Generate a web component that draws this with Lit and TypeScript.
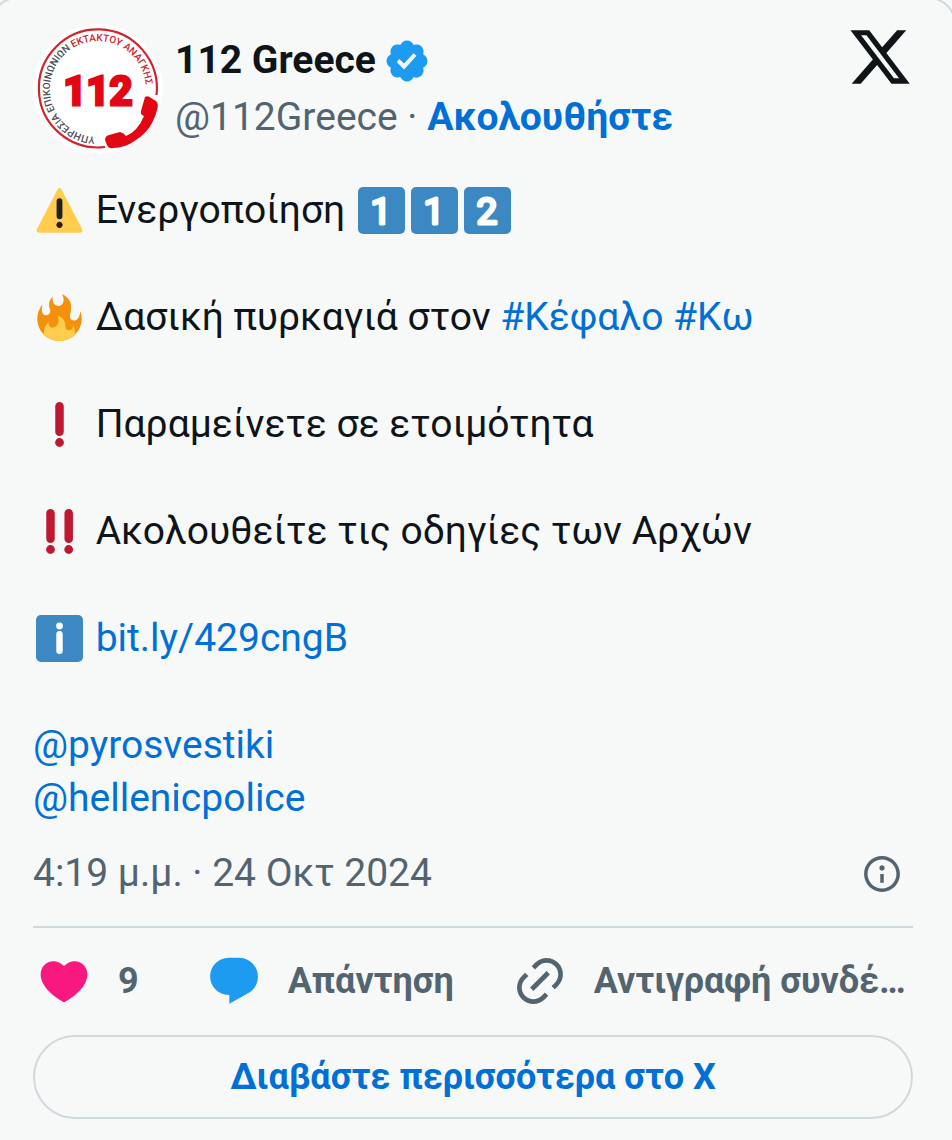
import { LitElement, html, css, svg } from "lit";
import { customElement } from "lit/decorators.js";

const keycap = (digit: string) => html`<svg class="emoji" viewBox="0 0 47 47" role="img" aria-label="${digit}">
  <rect width="47" height="47" rx="5" fill="#3b88c3" />
  <text class="keycap" x="23" y="36.5" text-anchor="middle">${digit}</text>
</svg>`;

const bang = (x: number) => svg`
  <rect x=${x - 4.25} y="1" width="8.5" height="34" rx="4.25" fill="#be1931" />
  <circle cx=${x} cy="41.5" r="4.4" fill="#be1931" />`;

const warning = html`<svg class="emoji" viewBox="0 0 36 36" aria-hidden="true">
  <path fill="#FFCC4D" d="M2.653 35C.811 35-.001 33.662.847 32.027L16.456 1.972c.849-1.635 2.238-1.635 3.087 0l15.609 30.056c.85 1.634.037 2.972-1.805 2.972H2.653z" />
  <path fill="#231F20" d="M15.583 28.953c0-1.333 1.085-2.418 2.419-2.418 1.333 0 2.418 1.085 2.418 2.418 0 1.334-1.086 2.419-2.418 2.419-1.334 0-2.419-1.085-2.419-2.419zm.186-18.293c0-1.302.961-2.108 2.232-2.108 1.241 0 2.233.837 2.233 2.108v11.938c0 1.271-.992 2.108-2.233 2.108-1.271 0-2.232-.807-2.232-2.108V10.66z" />
</svg>`;

const fire = html`<svg class="emoji" viewBox="0 0 36 36" aria-hidden="true">
  <path fill="#F4900C" d="M35 19c0-2.062-.367-4.039-1.04-5.868-.46 5.389-3.333 8.157-6.335 6.868-2.812-1.208-.917-5.917-.777-8.164.236-3.809-.012-8.169-6.931-11.794 2.875 5.5.333 8.917-2.333 9.125-2.958.231-5.667-2.542-4.667-7.042-3.238 2.386-3.332 6.402-2.333 9 1.042 2.708-.042 4.958-2.583 5.208-2.84.28-4.418-3.041-2.963-8.333C2.52 10.965 1 14.805 1 19c0 9.389 7.611 17 17 17s17-7.611 17-17z" />
  <path fill="#FFCC4D" d="M28.394 23.999c.148 3.084-2.561 4.293-4.019 3.709-2.106-.843-1.541-2.291-2.083-5.291s-2.625-5.083-5.708-6c2.25 6.333-1.247 8.667-3.08 9.084-1.872.426-3.753-.001-3.968-4.007C7.352 23.668 6 26.676 6 30c0 .368.023.73.055 1.09C9.125 34.124 13.342 36 18 36s8.875-1.876 11.945-4.91c.032-.36.055-.722.055-1.09 0-2.187-.584-4.236-1.606-6.001z" />
</svg>`;

@customElement("app-root")
export class AppRoot extends LitElement {
  static styles = css`
    :host {
      display: block;
      overflow: hidden;
      background: #f7f9f9;
      color: #0f1419;
      font: 400 39px/53px Roboto, "Noto Sans", sans-serif;
    }
    * { box-sizing: border-box; }
    svg { display: block; flex: none; }
    a { color: #006fd6; text-decoration: none; }
    p { margin: 0; }
    .card {
      margin: -3px -4px -26px -10px;
      padding: 25px 41px 48px 41px;
      border: 2px solid #cfd9de;
      border-radius: 27px;
    }
    .header { display: flex; align-items: flex-start; }
    .avatar { width: 130px; height: 130px; }
    .who {
      flex: 1;
      min-width: 0;
      padding: 8px 0 0 12px;
      line-height: 57px;
      white-space: nowrap;
    }
    .name { display: flex; align-items: center; gap: 7px; color: inherit; font-weight: 700; }
    .handle, .time { color: #536471; }
    .follow { font-weight: 700; }
    .body { display: flex; flex-direction: column; gap: 54px; margin-top: 30px; }
    .emoji { display: inline-block; width: 47px; height: 47px; margin: 0 3px; vertical-align: -11px; }
    .keycap { font: 400 37px Roboto, sans-serif; fill: #fff; stroke: #fff; stroke-width: 3px; stroke-linejoin: round; }
    .meta {
      display: flex;
      align-items: center;
      justify-content: space-between;
      margin-top: 22px;
      padding: 0 10px 26px 0;
      border-bottom: 2px solid #cfd9de;
    }
    .actions { display: flex; align-items: center; padding: 25px 0 26px 3px; }
    button {
      display: flex;
      align-items: center;
      gap: 26px;
      border: 0;
      padding: 0;
      background: none;
      color: #536471;
      font: 700 36px/56px Roboto, "Noto Sans", sans-serif;
      white-space: nowrap;
    }
    .like { margin-right: 67px; }
    .reply { margin-right: 58px; }
    .copy { flex: 1; min-width: 0; }
    .label { min-width: 0; overflow: hidden; text-overflow: ellipsis; }
    .more {
      display: block;
      border: 2px solid #cfd9de;
      border-radius: 42px;
      font: 700 36px/80px Roboto, "Noto Sans", sans-serif;
      text-align: center;
    }
    .logo-big { font: 700 40px Roboto, sans-serif; fill: #e30613; stroke: #e30613; stroke-width: 3px; }
    .ring { font: 500 10px Roboto, sans-serif; }
  `;

  render() {
    return html`
      <article class="card">
        <header class="header">
          <svg class="avatar" viewBox="0 0 130 130" role="img" aria-label="112">
            <defs><path id="ring" d="M62 113A48 48 0 1 1 112.9 65L112.9 75" /></defs>
            <circle cx="65" cy="65" r="65" fill="#fff" />
            <path d="M123.5 71A59 59 0 1 0 72 123" fill="none" stroke="#d2232c" stroke-width="2.2" />
            <text class="ring"><textPath href="#ring"><tspan fill="#4a5055">ΥΠΗΡΕΣΙΑ ΕΠΙΚΟΙΝΩΝΙΩΝ </tspan><tspan fill="#d2232c">ΕΚΤΑΚΤΟΥ ΑΝΑΓΚΗΣ</tspan></textPath></text>
            <text class="logo-big" x="65" y="81" text-anchor="middle">112</text>
            <path fill="#e30613" d="M112 73Q115 71 118 74L123 77Q126 80 124 86Q119 106 103 116Q92 124 80 124Q76 125 74 121L72 116Q72 112 76 111L87 108Q91 109 93 112Q105 107 111 92Q107 91 108 87Z" />
          </svg>
          <div class="who">
            <a class="name" href="#profile">112 Greece
              <svg width="48" height="48" viewBox="0 0 22 22" aria-hidden="true"><path fill="#1d9bf0" d="M20.396 11c-.018-.646-.215-1.275-.57-1.816-.354-.54-.852-.972-1.438-1.246.223-.607.27-1.264.14-1.897-.131-.634-.437-1.218-.882-1.687-.47-.445-1.053-.75-1.687-.882-.633-.13-1.29-.083-1.897.14-.273-.587-.704-1.086-1.245-1.44S11.647 1.62 11 1.604c-.646.017-1.273.213-1.813.568s-.969.854-1.24 1.44c-.608-.223-1.267-.272-1.902-.14-.635.13-1.22.436-1.69.882-.445.47-.749 1.055-.878 1.688-.13.633-.08 1.29.144 1.896-.587.274-1.087.705-1.443 1.245-.356.54-.555 1.17-.574 1.817.02.647.218 1.276.574 1.817.356.54.856.972 1.443 1.245-.224.606-.274 1.263-.144 1.896.13.634.433 1.218.877 1.688.47.443 1.054.747 1.687.878.633.132 1.29.084 1.897-.136.274.586.705 1.084 1.246 1.439.54.354 1.17.551 1.816.569.647-.016 1.276-.213 1.817-.567s.972-.854 1.245-1.44c.604.239 1.266.296 1.903.164.636-.132 1.22-.447 1.68-.907.46-.46.776-1.044.908-1.681s.075-1.299-.165-1.903c.586-.274 1.084-.705 1.439-1.246.354-.54.551-1.17.569-1.816zM9.662 14.85l-3.429-3.428 1.293-1.302 2.072 2.072 4.4-4.794 1.347 1.246z" /></svg>
            </a>
            <div><a class="handle" href="#profile">@112Greece</a><span class="handle"> · </span><a class="follow" href="#follow">Ακολουθήστε</a></div>
          </div>
          <a href="#x" aria-label="X"><svg width="66" height="66" viewBox="0 0 24 24"><path fill="#0f1419" d="M18.244 2.25h3.308l-7.227 8.26 8.502 11.24H16.17l-5.214-6.817L4.99 21.75H1.68l7.73-8.835L1.254 2.25H8.08l4.713 6.231zm-1.161 17.52h1.833L7.084 4.126H5.117z" /></svg></a>
        </header>

        <div class="body">
          <p>${warning} Ενεργοποίηση ${keycap("1")}${keycap("1")}${keycap("2")}</p>
          <p>${fire} Δασική πυρκαγιά στον <a href="#t1">#Κέφαλο</a> <a href="#t2">#Κω</a></p>
          <p><svg class="emoji" viewBox="0 0 47 47" aria-hidden="true">${bang(23.5)}</svg> Παραμείνετε σε ετοιμότητα</p>
          <p><svg class="emoji" viewBox="0 0 47 47" aria-hidden="true">${bang(14.5)}${bang(32.7)}</svg> Ακολουθείτε τις οδηγίες των Αρχών</p>
          <p><svg class="emoji" viewBox="0 0 47 47" aria-hidden="true">
              <rect width="47" height="47" rx="5" fill="#3b88c3" />
              <circle cx="23.5" cy="11" r="3.4" fill="#fff" />
              <rect x="20.3" y="16" width="6.4" height="23" rx="3.2" fill="#fff" />
            </svg> <a href="#link">bit.ly/429cngB</a></p>
          <p><a href="#m1">@pyrosvestiki</a><br /><a href="#m2">@hellenicpolice</a></p>
        </div>

        <div class="meta">
          <a class="time" href="#status">4:19 μ.μ. · 24 Οκτ 2024</a>
          <a class="time" href="#info" aria-label="Info"><svg width="42" height="42" viewBox="0 0 24 24" fill="currentColor"><path d="M13.5 8.5c0 .83-.67 1.5-1.5 1.5s-1.5-.67-1.5-1.5S11.17 7 12 7s1.5.67 1.5 1.5zM13 17v-5h-2v5h2zm-1 5.25c5.66 0 10.25-4.59 10.25-10.25S17.66 1.75 12 1.75 1.75 6.34 1.75 12 6.34 22.25 12 22.25zM20.25 12c0 4.56-3.69 8.25-8.25 8.25S3.75 16.56 3.75 12 7.44 3.75 12 3.75s8.25 3.69 8.25 8.25z" /></svg></a>
        </div>

        <div class="actions">
          <button class="like"><svg width="56" height="56" viewBox="0 0 24 24" aria-hidden="true"><path fill="#f91880" d="M20.884 13.19c-1.351 2.48-4.001 5.12-8.379 7.67l-.503.3-.504-.3c-4.379-2.55-7.029-5.19-8.382-7.67-1.36-2.5-1.41-4.86-.514-6.67.887-1.79 2.647-2.91 4.601-3.01 1.651-.09 3.368.56 4.798 2.01 1.429-1.45 3.146-2.1 4.796-2.01 1.954.1 3.714 1.22 4.601 3.01.896 1.81.846 4.17-.514 6.67z" /></svg><span class="label">9</span></button>
          <button class="reply"><svg width="56" height="56" viewBox="0 0 24 24" aria-hidden="true"><path fill="#1d9bf0" d="M1.751 10c0-4.42 3.584-8 8.005-8h4.366c4.49 0 8.129 3.64 8.129 8.13 0 2.96-1.607 5.68-4.196 7.11l-8.054 4.46v-3.69h-.067c-4.49.1-8.183-3.51-8.183-8.01z" /></svg><span class="label">Απάντηση</span></button>
          <button class="copy"><svg width="56" height="56" viewBox="0 0 24 24" fill="currentColor" aria-hidden="true"><path d="M18.36 5.64c-1.95-1.96-5.11-1.96-7.07 0L9.88 7.05 8.46 5.64l1.42-1.42c2.73-2.73 7.16-2.73 9.9 0 2.73 2.74 2.73 7.17 0 9.9l-1.42 1.42-1.41-1.42 1.41-1.41c1.96-1.96 1.96-5.12 0-7.07zm-2.12 3.53l-7.07 7.07-1.41-1.41 7.07-7.07 1.41 1.41zm-12.02.71l1.42-1.42 1.41 1.42-1.41 1.41c-1.96 1.96-1.96 5.12 0 7.07 1.95 1.96 5.11 1.96 7.07 0l1.41-1.41 1.42 1.41-1.42 1.42c-2.73 2.73-7.16 2.73-9.9 0-2.73-2.74-2.73-7.17 0-9.9z" /></svg><span class="label">Αντιγραφή συνδέσμου</span></button>
        </div>

        <a class="more" href="#more">Διαβάστε περισσότερα στο X</a>
      </article>
    `;
  }
}
